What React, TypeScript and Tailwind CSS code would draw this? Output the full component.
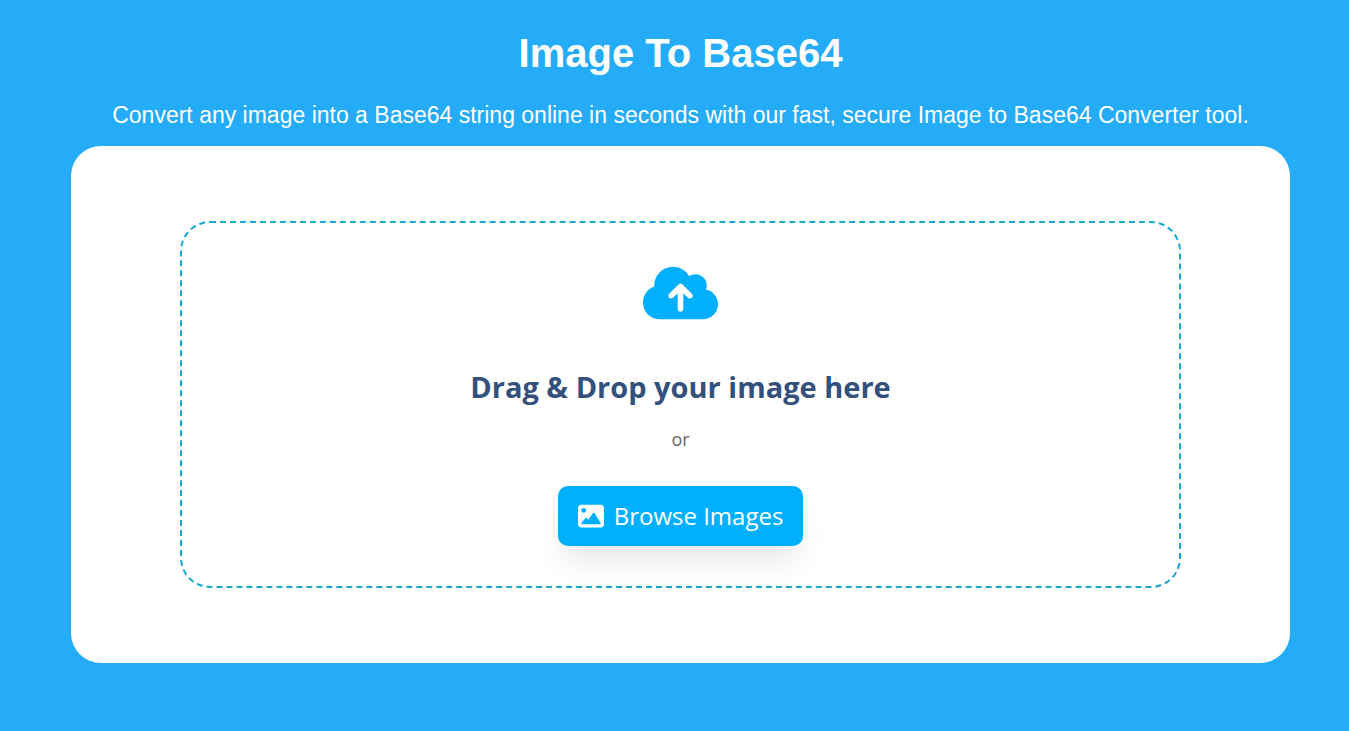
import { useRef, useState, type DragEvent } from "react";
import { FaCloudArrowUp } from "react-icons/fa6";

function ImageIcon({ className }: { className?: string }) {
  return (
    <svg viewBox="0 0 512 512" fill="currentColor" aria-hidden="true" className={className}>
      <path
        fillRule="evenodd"
        d="M448 32H64C28.7 32 0 60.7 0 96v320c0 35.3 28.7 64 64 64h384c35.3 0 64-28.7 64-64V96c0-35.3-28.7-64-64-64zM112 96c26.5 0 48 21.5 48 48s-21.5 48-48 48-48-21.5-48-48 21.5-48 48-48zM446 407.600C443.300 412.800 437.900 416 432 416H82c-6 0-11.500-3.400-14.300-8.800-2.700-5.400-2.200-11.800 1.300-16.700l80-96c3-4.100 7.900-6.500 13-6.500s9.900 2.400 12.900 6.600L202 332l94-133c3-4.300 8-7 13.300-7s10.300 2.700 13.300 7.100l123 192c3.300 4.900 3.200 11.200.4 16.500z"
      />
    </svg>
  );
}

function DropZone({ onFile }: { onFile: (file: File) => void }) {
  const inputRef = useRef<HTMLInputElement>(null);

  const handleDrop = (e: DragEvent<HTMLDivElement>) => {
    e.preventDefault();
    const file = e.dataTransfer.files[0];
    if (file) onFile(file);
  };

  return (
    <div
      onDragOver={(e) => e.preventDefault()}
      onDrop={handleDrop}
      className="mx-auto flex w-full max-w-[1001px] flex-col items-center rounded-[30px] border-2 border-dashed border-[#1aa7d0] px-5 pt-10 pb-10 text-center font-['Open_Sans','Noto_Sans',sans-serif]"
    >
      <FaCloudArrowUp className="h-[60px] w-[75px] text-[#00b0ff]" />
      <h2 className="mt-11 text-[29px] leading-10 font-bold text-[#34507c]">
        Drag &amp; Drop your image here
      </h2>
      <p className="mt-4 text-lg leading-8 text-[#666666]">or</p>
      <input
        ref={inputRef}
        type="file"
        accept="image/*"
        aria-label="Image file"
        className="hidden"
        onChange={(e) => {
          const file = e.target.files?.[0];
          if (file) onFile(file);
        }}
      />
      <button
        type="button"
        onClick={() => inputRef.current?.click()}
        className="mt-[31px] flex h-[60px] cursor-pointer items-center gap-2.5 rounded-[10px] bg-[#00b0ff] px-5 text-2xl text-white shadow-[0_20px_30px_-5px_rgba(0,0,0,0.09)]"
      >
        <ImageIcon className="size-[26px]" />
        Browse Images
      </button>
    </div>
  );
}

export default function App() {
  const [, setFile] = useState<File | null>(null);

  return (
    <main className="min-h-screen bg-[#24acf8] pt-7 pb-16 pl-3 font-['Liberation_Sans',Arial,sans-serif]">
      <div className="mx-auto max-w-[1219px]">
        <header className="text-center text-white">
          <h1 className="text-[40px] leading-[50px] font-bold">Image To Base64</h1>
          <p className="mt-5 text-[23px] leading-[34px]">
            Convert any image into a Base64 string online in seconds with our fast, secure Image to Base64 Converter tool.
          </p>
        </header>
        <section className="mt-3.5 rounded-[30px] bg-white px-5 py-[75px]">
          <DropZone onFile={setFile} />
        </section>
      </div>
    </main>
  );
}
